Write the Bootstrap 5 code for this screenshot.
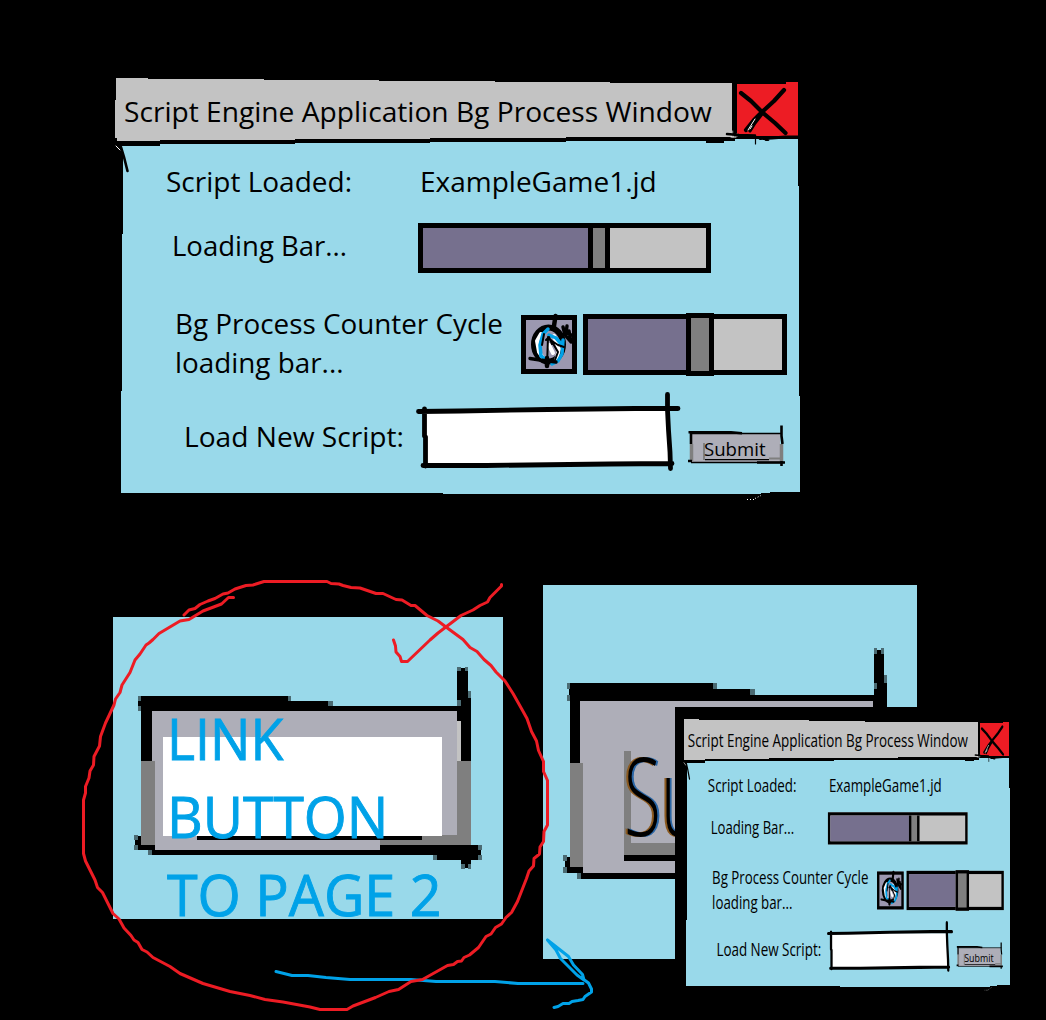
<!DOCTYPE html>
<html lang="en">
<head>
<meta charset="utf-8">
<meta name="viewport" content="width=device-width, initial-scale=1">
<title>Script Engine Application</title>
<link href="https://cdn.jsdelivr.net/npm/bootstrap@5.3.0/dist/css/bootstrap.min.css" rel="stylesheet">
<style>
  body { background: #000; color: #000; font-family: "Open Sans", "Noto Sans", sans-serif; }
  .board { width: 1046px; height: 1020px; background: #000; }
  .board svg { display: block; }
  .sketch { left: 0; top: 0; pointer-events: none; overflow: visible; }
  .fit { display: inline-block; white-space: pre; transform-origin: 0 50%; }

  /* application window */
  .app-win { left: 116px; top: 78px; width: 684px; height: 415px; font-size: 28px; line-height: 39px; }
  .app-title { height: 66px; padding-left: 8px; }
  .label-col { width: 302px; flex: none; }
  .row-script { height: 74px; }
  .row-script .label-col { width: 304px; padding-left: 50px; }
  .row-load { height: 60px; }
  .row-load .label-col { padding: 0 0 6px 56px; }
  .row-cycle { height: 133px; }
  .row-cycle .label-col { width: 405px; padding: 0 0 4px 59px; }
  .row-new { height: 54px; }
  .row-new .label-col { width: 309px; padding: 0 0 4px 68px; }

  .bar { border: 5px solid #000; background: #c3c3c3; }
  .bar-a { width: 293px; height: 50px; }
  .bar-b { width: 204px; height: 61px; margin-left: 6px; }
  .bar-fill { background: #76708e; flex: none; }
  .bar-thumb { background: #7f7f7f; border: 5px solid #000; border-width: 0 5px; flex: none; }
  .bar-a .bar-fill { width: 165px; }
  .bar-a .bar-thumb { width: 22px; }
  .bar-b .bar-fill { width: 98px; }
  .bar-b .bar-thumb { width: 28px; border-width: 5px; margin: -6px 0; }
  .cycle-icon { width: 56px; height: 59px; border: 5px solid #000; background: #9c98b0; }
  .script-input { width: 244px; height: 54px; border: 0; border-radius: 0; background: #fff; padding: 0 8px; }
  .submit-btn { width: 90px; height: 28px; margin: 20px 0 0 21px; padding: 0 0 0 14px; border: 0; border-radius: 0; background: linear-gradient(#7f7f7f, #7f7f7f) 13px 9px / 2px 17px no-repeat #aeaeb8; font-size: 18px; line-height: 30px; text-align: left; color: #000; }

  /* detail panels */
  .panel-link { left: 113px; top: 617px; width: 390px; height: 302px; background: #99d9ea; }
  .link-text { padding: 82px 0 0 54px; color: #00a2e8; font-size: 56px; line-height: 78px; position: relative; -webkit-text-stroke: .9px #00a2e8; }
  .panel-zoom { left: 543px; top: 585px; width: 374px; height: 374px; background: #99d9ea; }
  .zoom-text { padding: 135px 0 0 81px; position: relative; font-size: 108px; line-height: 150px; font-weight: 300; text-shadow: -3px 0 #8b5a20, 3px 0 #2a66a5; }
  .page-two { left: 675px; top: 707px; width: 371px; height: 313px; background: #000; }
  .page-two .app-win { left: 9px; top: 12px; transform: scale(.4766, .6434); transform-origin: 0 0; }
</style>
<script src="https://cdn.jsdelivr.net/npm/bootstrap@5.3.0/dist/js/bootstrap.bundle.min.js"></script>
</head>
<body>
<main class="board position-relative overflow-hidden">

  <section class="app-win position-absolute" id="mainWindow">
    <!-- uneven window background -->
    <svg class="sketch position-absolute" width="684" height="415" viewBox="116 78 684 415" shape-rendering="crispEdges">
      <path fill="#99d9ea" d="M118 145H160V144H295V143H430V142H566V141H735V139H798V186H799V396H800V492H775L757 494H443V493H121V391H122V234H123V150Z"/>
      <path fill="#c3c3c3" d="M116 78H148V79H264V80H379V81H495V82H610V83H732V137H566V138H430V139H295V140H160V141H117V138H115V100H116Z"/>
      <path fill="#000" d="M116 141H160V140H295V139H430V138H566V137H735V141H724V143H706V141H566V142H430V143H295V144H160V146H116Z"/>
      <path fill="#ed1c24" d="M737 84H786V82H798V136H737Z"/>
    </svg>

    <header class="app-title d-flex align-items-center position-relative"><span class="fit" data-w="588">Script Engine Application Bg Process Window</span></header>
    <div class="d-flex flex-column position-relative">
      <div class="row-script d-flex align-items-center">
        <div class="label-col"><span class="fit" data-w="186">Script Loaded:</span></div>
        <span class="fit" data-w="237">ExampleGame1.jd</span>
      </div>
      <div class="row-load d-flex align-items-center">
        <div class="label-col"><span class="fit" data-w="175">Loading Bar...</span></div>
        <div class="bar bar-a d-flex"><div class="bar-fill"></div><div class="bar-thumb"></div></div>
      </div>
      <div class="row-cycle d-flex align-items-center">
        <div class="label-col"><span class="fit" data-w="328">Bg Process Counter Cycle</span><br><span class="fit" data-w="169">loading bar...</span></div>
        <div class="cycle-icon"></div>
        <div class="bar bar-b d-flex"><div class="bar-fill"></div><div class="bar-thumb"></div></div>
      </div>
      <div class="row-new d-flex align-items-center">
        <div class="label-col"><span class="fit" data-w="220">Load New Script:</span></div>
        <input class="script-input" type="text" aria-label="Load new script">
        <button class="submit-btn" type="button"><span class="fit" data-w="62">Submit</span></button>
      </div>
    </div>

    <!-- pen strokes over the controls -->
    <svg class="sketch position-absolute" width="684" height="415" viewBox="116 78 684 415" fill="none" stroke="#000" stroke-linecap="round" stroke-linejoin="round">
      <path stroke="#fff" stroke-width="1" d="M116 146l4 4M733 131v6M737 134v2M731 137h5"/>
      <path stroke-width="4.2" d="M741 93L751 101L762 112L775 123L785.500 133M784 90L774 101L762 112L754 120L746 130"/>
      <path stroke-width="3.200" d="M762 114L755 123L750 131"/>
      <path stroke="#fff" stroke-width="1" d="M755 119L748 130M752 126L750 129"/>
      <path stroke-width="2.500" d="M727 134L739 135L755 135.500M734.500 84V133"/>
      <path stroke-width="3" d="M760 138.500L772 138L785 137L798 137M766 139.500H768"/>
      <path stroke-width="1.200" d="M755.500 138V144"/>
      <path stroke-width="2.600" d="M121 147L124 157L127.500 171"/>
      <!-- cycle emblem -->
      <ellipse cx="548.500" cy="344.500" rx="14.500" ry="17" stroke-width="6"/>
      <path stroke="#fff" stroke-width="4" d="M541 334L537 341L539 352L543 358M554 336L559 349L556 361M549 345L553 353"/>
      <path stroke="#00a2e8" stroke-width="3.500" d="M548 329L543 334L540 345L541 356L545 359M549 335L556 338L562 345M563 340L562 354L558 361L552 364"/>
      <path stroke-width="2" d="M548 337L547 366M544 334L542 345M549 339L558 345L564 347M551 340L558 352L555 360M546 340L549 337L552 344"/>
      <path stroke-width="4.500" d="M555.500 316L553.500 329M547 358V366"/>
      <path stroke-width="3.400" d="M530 358.500L540 360L556 362M563 327L565 335L571 342M567 326L566 333L572 335M561 336L569 331L571 342"/>
      <!-- input outline -->
      <g stroke-width="4.800">
        <path d="M418.500 411.500L460 411L548 409.500L635 408.500L678 408.500M424.500 409V436L425.500 437V466M423 465.500H486L610 464L672 463.500M667.500 394.500V410L668.500 430L670 452L670.500 468.500"/>
      </g>
      <!-- submit outline -->
      <g stroke-linecap="butt">
        <path stroke="#7f7f7f" stroke-width="3.500" d="M691.500 444V461M781.500 444V461"/>
        <path stroke="#7f7f7f" stroke-width="2" d="M769 458.500H782"/>
        <path stroke-width="1.300" d="M690 433.500H782M691 462.500H784M705 459.600H769"/>
        <path stroke-width="2.600" d="M688.500 432.300H731L742 433.200M691 432V444M781.500 425.500V436L782.500 444M757 462.500H785M781.500 461V466M688 461H692"/>
      </g>
      <path stroke="#fff" stroke-width="1" stroke-dasharray="1 2" stroke-linecap="butt" d="M747 499.500H754M755 498.500L761 495.500"/>
    </svg>
  </section>

  <section class="panel-link position-absolute">
    <svg class="sketch position-absolute" width="390" height="302" viewBox="113 617 390 302" shape-rendering="crispEdges">
      <path fill="#aeaeb8" d="M152 711H457V850H152Z"/>
      <path d="M138 696H288V701H328V706H461V711H152V761H141V711H138Z"/>
      <path fill="#7f7f7f" d="M141 761H155V845H141ZM457 761H471V845H380V840H422V835H457Z"/>
      <path d="M457 668H468V694H471V761H461V721H457Z"/>
      <path fill="#c3c3c3" d="M457 721H461V761H457Z"/>
      <path d="M135 836H141V845H155V850H380V845H471V845H481V860H471V868H461V860H434V855H150V850H135Z"/>
      <path fill="#fff" d="M163 737H442V836H163Z"/>
      <path d="M197 836H422V840H197Z"/>
      <path fill="#4b6b73" d="M288 696h3v5h-3zM328 701h5v5h-5zM138 696h3v5h-3zM138 706h3v5h-3zM457 667h4v4h-4zM465 667h3v4h-3zM457 700h4v6h-4zM468 691h3v7h-3zM134 835h4v5h-4zM134 845h4v5h-4zM148 850h4v5h-4zM433 855h4v5h-4zM478 845h4v5h-4zM478 855h4v5h-4zM461 864h4v5h-4zM468 864h3v5h-3z"/>
    </svg>
    <div class="link-text"><span class="fit" data-w="116">LINK</span><br><span class="fit" data-w="221">BUTTON</span><br><span class="fit" data-w="274">TO PAGE 2</span></div>
  </section>

  <section class="panel-zoom position-absolute">
    <svg class="sketch position-absolute" width="374" height="374" viewBox="543 585 374 374" shape-rendering="crispEdges">
      <path fill="#aeaeb8" d="M580 701H874V873H580Z"/>
      <path d="M569 683H713V689H750V695H874V650H884V677H887V730H873V701H580V763H570V701H569Z"/>
      <path fill="#7f7f7f" d="M570 763H583V867H570ZM624 751H631V843H675V855H624Z"/>
      <path d="M565 857H570V867H583V873H675V879H578V873H565ZM624 855H675V861H624Z"/>
      <path fill="#4b6b73" d="M567 683h3v6h-3zM567 695h3v6h-3zM713 683h4v6h-4zM750 689h5v6h-5zM563 855h4v6h-4zM563 867h4v6h-4zM577 873h4v6h-4zM874 648h3v6h-3zM881 648h3v6h-3zM874 683h3v6h-3zM884 675h3v8h-3z"/>
    </svg>
    <div class="zoom-text"><span class="fit" data-w="77">Su</span></div>
  </section>

  <section class="page-two position-absolute" id="pageTwo"></section>

  <!-- marker annotations -->
  <svg class="sketch position-absolute" width="1046" height="1020" viewBox="0 0 1046 1020" fill="none" stroke-width="3" stroke-linecap="round" stroke-linejoin="round">
    <path stroke="#00a2e8" d="M276 971.500L292 975.500H308L326 977.500L350 979.500H411L436 981.500H495L518 983.500H583M547.500 940L568.500 956.500L573.500 965L582.500 974.500L584 980L577 975L560.500 958.500L556 950L547.500 940M583 979L588.500 983L591.500 989V992L585 996.500L583 999.500L578 1000.500L572 1001.500L569 1003.500H563L558 1006.500L554 1007.500"/>
    <path stroke="#ed1c24" d="M184 615L189 610L195 608.500L200 604.500L208 601L215 598.500L223 594L228 593L235 589L246 585.500L253 585L264 581.500H327L331 583.500L339 584L343 585.500L351 587.500L360 588L376 593.500H383L396 599.500L402 600L411 605.500H415L427 615.500L438 621L446 627L463 639.500L470 647.500L477 651.500L484 659.500L491 665.500L496 672L505 681L513 693.500L522 709.500L527 718.500L531.500 731.500L536.500 741L538.500 750.500L543.500 761.500V771.500L547.500 780.500V825L544 831.500L543.500 841.500L540 847L539.500 854L534 858.500L533.500 866L529 871L526.500 878.500L517.500 901.500L511.500 912.500L506 917.500L501.500 924L495.500 927.500L491 934L486 936.500L478.500 947.500L469.500 955L464 957.500L461.500 961L457.500 961.500L453.500 964.500L447.500 965.500L422.500 979.500L411 981.500L398.500 989.500L389 991.500L375.500 997.500L353 1006L347 1009.500H320L310 1007L283 1002L265 999.500L250 995.500L230 991.500L203 983.500L180 973.500L170 966.500L153 957.500L147 952L142 949.500L138 942.500L134 940L131 935.500L124 928L119 919L113 913.500L102.500 892.500L97.500 887.500L95 880L85.500 861L83.500 853.500V800L85.500 793L85.500 786.500L89 778L90 771L93.500 765L94 756.500L99.500 746L100.500 736.500L105.500 723L114 705L115.500 699L120 692.500L122 685L130 672.500L135 660L140 654L146 645L149 643L153 639.500L159 633.500L180 621L189 619.500L203 611L221.500 604L228.500 597.500H233.500M393.500 640L395.500 646L396 652L400 656.500L401.500 661.500H407.500L430 640L438 633L461 615.500L473 610L480 605.500L487.500 602L490 597.500L501.500 586V584.500"/>
  </svg>
</main>
<script>
  // The second page shows a reduced copy of the main window.
  const copy = document.getElementById('mainWindow').cloneNode(true);
  copy.removeAttribute('id');
  document.getElementById('pageTwo').append(copy);
  // Condense each label to the width it declares.
  document.querySelectorAll('.fit').forEach(el => {
    el.style.transform = 'scaleX(' + (el.dataset.w / el.offsetWidth) + ')';
  });
</script>
</body>
</html>
